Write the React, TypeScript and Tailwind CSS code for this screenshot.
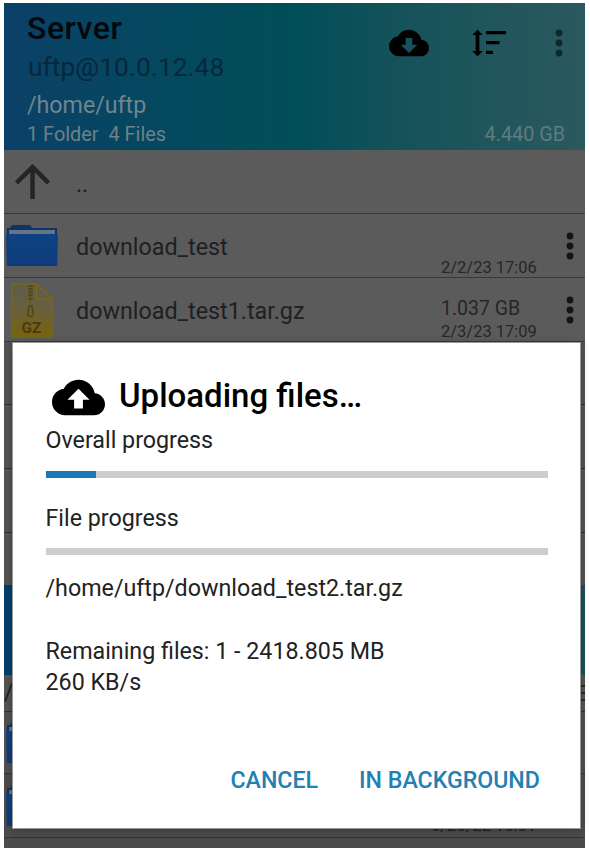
import React from "react";

const CLOUD =
  "M19.35 10.04C18.67 6.59 15.64 4 12 4 9.11 4 6.6 5.64 5.35 8.04 2.34 8.36 0 10.91 0 14c0 3.31 2.69 6 6 6h13c2.76 0 5-2.24 5-5 0-2.64-2.05-4.78-4.65-4.96z";

function Cloud({ arrow, className }: { arrow: string; className: string }) {
  return (
    <svg viewBox="0 0 24 24" className={className} fill="currentColor" fillRule="evenodd">
      <path d={CLOUD + arrow} />
    </svg>
  );
}

function SortIcon() {
  return (
    <svg viewBox="0 0 34 28" className="h-7 w-[34px]" fill="currentColor">
      <path d="M5.500 0.500l5.200 5.500H7.400v16h3.300L5.500 27.500.3 22h3.300V6H.3z" />
      <path d="M14 2h20v3.300H14zM14 12h13.500v3.300H14zM14 21.700h7V25h-7z" />
    </svg>
  );
}

function Dots({ className }: { className: string }) {
  return (
    <svg viewBox="0 0 8 28" className={className} fill="currentColor">
      <circle cx="4" cy="4" r="3.400" />
      <circle cx="4" cy="14" r="3.400" />
      <circle cx="4" cy="24" r="3.400" />
    </svg>
  );
}

function Folder() {
  return (
    <svg viewBox="0 0 52 41" className="h-[41px] w-[52px] shrink-0">
      <defs>
        <linearGradient id="folder" x1="0" y1="0" x2="0" y2="1">
          <stop offset="0" stopColor="#0e4282" />
          <stop offset="1" stopColor="#0d3c7c" />
        </linearGradient>
      </defs>
      <path d="M4 3l2-3h18l2 3h25v9H1V3z" fill="#0b346b" />
      <path d="M3 5h46v5H3z" fill="#677482" />
      <path d="M0 9h52L51.200 41H.8z" fill="url(#folder)" />
    </svg>
  );
}

function GzFile() {
  return (
    <svg viewBox="0 0 42 55" className="h-[55px] w-[42px] shrink-0">
      <defs>
        <linearGradient id="gz" x1="0" y1="0" x2="0" y2="1">
          <stop offset="0" stopColor="#5f5c50" />
          <stop offset=".5" stopColor="#68603c" />
          <stop offset=".85" stopColor="#74621a" />
          <stop offset="1" stopColor="#7a6506" />
        </linearGradient>
      </defs>
      <path d="M1 1h24.500L41 15.500V54H1z" fill="url(#gz)" stroke="#7a6812" strokeWidth="1.400" />
      <path d="M25.500 1v14.500H41z" fill="#5f5c50" stroke="#7a6812" strokeWidth="1.400" />
      <path d="M17 3h5M17 6h5M17 9h5M17 12h5M17 16h5" stroke="#54460f" strokeWidth="1.600" />
      <path d="M19.500 2v18" stroke="#54460f" strokeWidth="1" strokeDasharray="2 1.500" />
      <path d="M18 23h3l1.200 7a2.800 2.800 0 1 1-5.400 0z" fill="none" stroke="#54460f" strokeWidth="1.600" />
      <text x="20.500" y="50" textAnchor="middle" fontFamily="Roboto, sans-serif" fontWeight="700" fontSize="15.500" fill="#4c3b0c">
        GZ
      </text>
    </svg>
  );
}

function Row({ icon, name, size, date }: { icon: React.ReactNode; name: string; size?: string; date: string }) {
  return (
    <div className="flex h-16 shrink-0 items-center border-b border-[#393939]">
      <div className="flex w-[72px] shrink-0 pl-0.5">{icon}</div>
      <div className="flex-1 pt-[3px] text-[23.300px] leading-7">{name}</div>
      <div className="flex h-full w-[125px] flex-col justify-end text-[#262626]">
        {size && <span className="text-[19.500px] leading-[25px]">{size}</span>}
        <span className="-mb-0.5 text-[16.500px] leading-[22px]">{date}</span>
      </div>
      <Dots className="mr-[11px] h-7 w-2 text-[#141414]" />
    </div>
  );
}

function Bar({ value }: { value: number }) {
  return (
    <div className="h-[6.500px] w-[502px] bg-[#cdcdce]">
      <div className="h-full bg-[#1a7ab8]" style={{ width: `${value}%` }} />
    </div>
  );
}

export default function App() {
  return (
    <div className="relative h-[852px] w-[590px] overflow-hidden bg-white pt-[3px] pl-1 font-[Roboto,sans-serif]">
      <div className="flex h-[845px] w-[581px] flex-col overflow-hidden bg-[#5b5b5b] text-[#202020]">
        <header className="flex h-[147px] shrink-0 justify-between bg-linear-to-r from-[#0b4067] via-[#004e58] to-[#2a595e] pt-[7px] pr-5 pl-[23px]">
          <div className="flex flex-col whitespace-pre">
            <span className="text-[32px] leading-[37px] font-medium tracking-[0.5px] text-[#03080d]">Server</span>
            <span className="pl-px text-[26.500px] leading-10 text-[#06283a]">uftp@10.0.12.48</span>
            <span className="text-[23.200px] leading-9 text-[#71858f]">/home/uftp</span>
            <span className="text-[19.900px] leading-[23px] text-[#6d8288]">1 Folder  4 Files</span>
          </div>
          <div className="flex flex-col items-end justify-between pb-1">
            <div className="flex items-center pt-[13px] text-black">
              <Cloud arrow="M17 13l-5 5-5-5h3V9h4v4h3z" className="mr-[43px] h-10 w-10" />
              <SortIcon />
              <Dots className="mr-[2px] ml-[49px] h-7 w-2 text-[#10282b]" />
            </div>
            <span className="text-[19.800px] leading-[23px] text-[#5f7c80]">4.440 GB</span>
          </div>
        </header>
        <div className="flex h-16 shrink-0 items-center border-b border-[#393939]">
          <div className="w-[72px] pl-[11px]">
            <svg viewBox="0 0 35 35" className="h-[35px] w-[35px]" fill="none" stroke="#252525" strokeWidth="4.500">
              <path d="M17.500 35V3M1.500 19L17.500 3l16 16" />
            </svg>
          </div>
          <span className="pt-1 text-[23.200px] leading-7">..</span>
        </div>
        <Row icon={<Folder />} name="download_test" date="2/2/23 17:06" />
        <Row
          icon={<div className="pt-[1px] pl-[5px]"><GzFile /></div>}
          name="download_test1.tar.gz"
          size="1.037 GB"
          date="2/3/23 17:09"
        />
        <div className="h-[63px] shrink-0 border-b border-[#333] bg-[#545454]" />
        <div className="h-16 shrink-0 border-b border-[#333] bg-[#545454]" />
        <div className="h-16 shrink-0 border-b border-[#333] bg-[#545454]" />
        <div className="h-[52px] shrink-0 bg-[#545454]" />
        <div className="h-[90px] shrink-0 bg-linear-to-r from-[#003f6c] via-[#004e58] to-[#1d5158]" />
        <div className="flex h-[37px] shrink-0 items-center justify-between border-b border-[#333] bg-[#545454]">
          <span className="text-[23px] leading-7">/</span>
          <div className="flex w-5 flex-col gap-[5px]">
            <div className="h-0.5 bg-[#2a2a2a]" />
            <div className="h-0.5 bg-[#2a2a2a]" />
            <div className="h-0.5 bg-[#2a2a2a]" />
          </div>
        </div>
        <div className="flex h-[62px] shrink-0 items-center border-b border-[#333] bg-[#515151] pl-0.5">
          <Folder />
        </div>
        <div className="flex h-16 shrink-0 items-center border-b border-[#333] bg-[#4c4c4c] pl-0.5">
          <Folder />
          <span className="mt-auto ml-[373px] text-[16.500px] leading-[22px]">6/26/22 16:31</span>
        </div>
        <div className="flex-1 bg-[#4b4b4b]" />
      </div>

      <section className="absolute top-[342px] left-3 flex h-[487px] w-[569px] flex-col border border-[#999] bg-white pl-[32.500px] text-[23.250px] text-[#222] shadow-[0_2px_8px_rgba(0,0,0,0.25)]">
        <div className="flex pt-7 pl-[6.500px] text-black">
          <Cloud arrow="M14 13v4h-4v-4H7l5-5 5 5h-3z" className="h-[53px] w-[53px]" />
          <h1 className="ml-[14px] text-[33px] leading-[50px] font-medium">Uploading files…</h1>
        </div>
        <p className="mt-[1px] leading-[30px]">Overall progress</p>
        <div className="mt-[16px]"><Bar value={10} /></div>
        <p className="mt-[25.500px] leading-[30px]">File progress</p>
        <div className="mt-[15px]"><Bar value={0} /></div>
        <p className="mt-[18.500px] leading-[30px]">/home/uftp/download_test2.tar.gz</p>
        <p className="mt-[33px] leading-[30.500px]">
          Remaining files: 1 - 2418.805 MB
          <br />
          260 KB/s
        </p>
        <div className="mt-[69px] flex gap-[41px] pl-[185px] text-[23.150px] leading-[30px] font-medium text-[#2280b5]">
          <button>CANCEL</button>
          <button>IN BACKGROUND</button>
        </div>
      </section>
    </div>
  );
}
